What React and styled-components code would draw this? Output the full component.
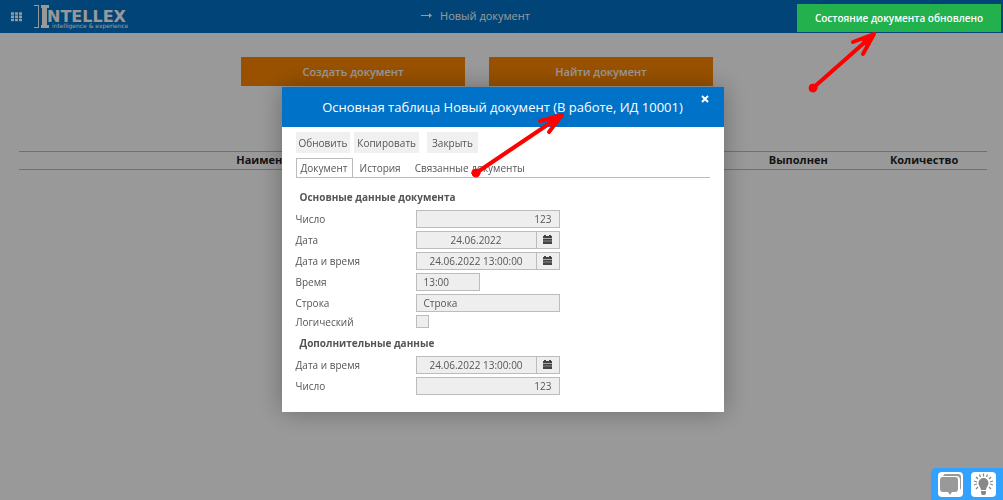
import React from "react";
import styled, { createGlobalStyle } from "styled-components";

const GlobalStyle = createGlobalStyle`
  * {
    box-sizing: border-box;
  }
  body {
    margin: 0;
    background: white;
    color: #222;
    font-family: "Open Sans", "Noto Sans", sans-serif;
    font-size: 11px;
  }
  button,
  input {
    margin: 0;
    font-family: inherit;
  }
`;

const Page = styled.div`
  min-height: 100vh;
`;

const TopBar = styled.header`
  display: grid;
  grid-template-columns: 1fr auto 1fr;
  align-items: center;
  height: 33px;
  padding: 0 52px 0 0;
  background: #0072c8;
  color: white;
`;

const Brand = styled.div`
  display: flex;
  align-items: center;
  gap: 12px;
  padding-left: 11px;
`;

const MenuButton = styled.button`
  display: flex;
  padding: 0;
  border: none;
  background: none;
`;

const DocTitle = styled.h1`
  display: flex;
  align-items: center;
  gap: 8px;
  margin: 0;
  padding-bottom: 3px;
  font-size: 11px;
  font-weight: 400;
`;

const Actions = styled.div`
  display: flex;
  justify-content: center;
  gap: 24px;
  padding: 24px 52px 0 3px;
`;

const ActionButton = styled.button`
  width: 224px;
  height: 29px;
  border: none;
  background: #ff8800;
  color: white;
  font-size: 11px;
  font-weight: 600;
`;

const DocTable = styled.table`
  width: calc(100% - 35px);
  margin: 65px 16px 0 19px;
  border-collapse: collapse;
  table-layout: fixed;
  th {
    height: 18px;
    padding: 0 0 2px;
    border-top: 1px solid #bbb;
    border-bottom: 1px solid #bbb;
    font-size: 11px;
    line-height: 15px;
    text-align: center;
  }
`;

const HelpBar = styled.div`
  position: fixed;
  right: 0;
  bottom: 0;
  z-index: 2;
  display: flex;
  gap: 8px;
  padding: 4px 7px 3px;
  border-radius: 5px 0 0 0;
  background: #33a2ff;
`;

const HelpButton = styled.button`
  display: flex;
  width: 25px;
  height: 25px;
  padding: 0;
  border: none;
  border-radius: 4px;
  background: white;
`;

const Overlay = styled.div`
  position: fixed;
  inset: 0;
  z-index: 1;
  padding: 87px 0 0 2px;
  background: rgba(0, 0, 0, 0.4);
`;

const Modal = styled.section`
  width: 442px;
  max-width: 100%;
  margin: 0 auto;
  padding-bottom: 17px;
  background: white;
  box-shadow: 0 0 24px rgba(0, 0, 0, 0.3);
  color: #555;
`;

const ModalHeader = styled.header`
  position: relative;
  height: 40px;
  background: #0072c8;
  color: white;
  h2 {
    margin: 0;
    font-size: 13px;
    font-weight: 400;
    line-height: 40px;
    text-align: center;
  }
`;

const CloseButton = styled.button`
  position: absolute;
  top: 8px;
  right: 15px;
  display: flex;
  padding: 0;
  border: none;
  background: none;
`;

const ModalBody = styled.div`
  padding: 5px 14px 0;
`;

const Toolbar = styled.div`
  display: flex;
  gap: 4px;
  button {
    height: 21px;
    padding: 0 3px;
    border: none;
    background: #f0f0f0;
    color: #555;
    font-size: 10px;
  }
  button:last-child {
    margin-left: 4px;
    padding: 0 5px;
  }
`;

const Tabs = styled.div`
  display: flex;
  margin-top: 5px;
  border-bottom: 1px solid #bcbcbc;
`;

const Tab = styled.button`
  height: 19px;
  padding: 0 ${p => (p.$active ? 4 : 7)}px;
  border: ${p => (p.$active ? "1px solid #bcbcbc" : "none")};
  border-bottom: none;
  background: none;
  color: #555;
  font-size: 10px;
`;

const FieldSet = styled.fieldset`
  display: flex;
  flex-direction: column;
  gap: 3px;
  min-width: 0;
  margin: 0;
  padding: 0;
  border: none;
  legend {
    padding: 12px 4px 5px;
    font-size: 10px;
    font-weight: 700;
    line-height: 15px;
  }
  & + & legend {
    padding-top: 8px;
  }
`;

const Row = styled.div`
  display: flex;
  align-items: center;
  height: ${p => (p.$short ? 13 : 18)}px;
  label {
    width: 120px;
    font-size: 10px;
  }
`;

const TextInput = styled.input`
  width: ${p => p.$width || 144}px;
  height: 18px;
  padding: 0 7px;
  border: 1px solid #bcbcbc;
  border-radius: 0;
  background: #eee;
  color: #555;
  font-size: 10px;
  text-align: ${p => p.$align || "left"};
  outline: none;
`;

const DateButton = styled.button`
  display: flex;
  align-items: center;
  justify-content: center;
  width: 23px;
  height: 18px;
  padding: 0 0 2px;
  border: 1px solid #bcbcbc;
  border-left: none;
  background: #eee;
`;

const CheckBox = styled.input`
  appearance: none;
  width: 13px;
  height: 13px;
  border: 1px solid #bcbcbc;
  background: #eee;
`;

const Toast = styled.div`
  position: fixed;
  top: 4px;
  right: 2px;
  z-index: 3;
  width: 204px;
  background: #22b14c;
  color: white;
  font-size: 10px;
  font-weight: 600;
  line-height: 28px;
  text-align: center;
`;

const Marks = styled.svg`
  position: fixed;
  top: 0;
  left: 0;
  z-index: 4;
  pointer-events: none;
`;

const Logo = () => (
  <svg width="94" height="28" viewBox="0 0 94 28" fill="white">
    <path d="M0 2h5v23H0v-1h4V3H0z" />
    <path d="M7 2h8v3h-2v17h2v3H7v-3h1V5H7z" />
    <text x="13" y="19" fontFamily="DejaVu Sans, sans-serif" fontSize="16" fontWeight="700">
      NTELLEX
    </text>
    <text x="18" y="25" fontFamily="DejaVu Sans, sans-serif" fontSize="6">
      intelligence &amp; experience
    </text>
  </svg>
);

const GridIcon = () => (
  <svg width="11" height="10" fill="white">
    {[0.3, 3.5, 6.7].map(y =>
      [0, 4, 8].map(x => <rect key={`${x}-${y}`} x={x} y={y} width="3" height="2.5" />)
    )}
  </svg>
);

const CalendarIcon = () => (
  <svg width="9" height="9" fill="#444" shapeRendering="crispEdges">
    <path d="M1 0h2v1h3V0h2v1h1v2H0V1h1zM0 4h9v1H0zM0 7h9v2H0z" />
    <path d="M0 5h9v2H0z" fill="#666" />
    <path d="M0 3h9v1H0z" fill="#aaa" />
  </svg>
);

const ChatIcon = () => (
  <svg width="25" height="25" viewBox="0 0 25 25" fill="#999">
    <path d="M7 2h13q3 0 3 3v10q0 2-1 3V8q0-4-4-4H5q1-2 2-2z" />
    <path d="M5 5h12q3 0 3 3v9q0 3-3 3h-3l-2 3-2-3H5q-3 0-3-3V8q0-3 3-3z" />
  </svg>
);

const BulbIcon = () => (
  <svg width="25" height="25" viewBox="0 0 25 25" fill="#888">
    <path d="M12.500 6a5 5 0 0 1 5 5c0 3-2 3.500-2.500 7h-5C9.500 14.500 7.500 14 7.500 11a5 5 0 0 1 5-5zM10 19h5v2l-1 2h-3l-1-2z" />
    <g stroke="#888" strokeWidth="1.300">
      <path d="M12.500 1.500v3M8.500 2.500l1 2.500M16.500 2.500l-1 2.500M5 5l2 2M20 5l-2 2M3 9l3 1M22 9l-3 1M3 13l3-1M22 13l-3-1M5 17l2-2M20 17l-2-2" />
    </g>
  </svg>
);

const Field = ({ id, label, value, align, width, date }) => (
  <Row>
    <label htmlFor={id}>{label}</label>
    <TextInput
      id={id}
      type="text"
      value={value}
      readOnly
      $align={date ? "center" : align}
      $width={date ? 121 : width}
    />
    {date && (
      <DateButton type="button" aria-label={label}>
        <CalendarIcon />
      </DateButton>
    )}
  </Row>
);

const App = () => (
  <Page>
    <GlobalStyle />
    <TopBar>
      <Brand>
        <MenuButton aria-label="Меню">
          <GridIcon />
        </MenuButton>
        <Logo />
      </Brand>
      <DocTitle>
        <svg width="11" height="5" fill="white">
          <path d="M0 2h8V0l3 2.500L8 5V3H0z" />
        </svg>
        Новый документ
      </DocTitle>
    </TopBar>
    <Actions>
      <ActionButton>Создать документ</ActionButton>
      <ActionButton>Найти документ</ActionButton>
    </Actions>
    <DocTable>
      <colgroup>
        <col width="54%" />
        <col />
        <col width="13%" />
        <col width="13%" />
      </colgroup>
      <thead>
        <tr>
          <th>Наименование</th>
          <th />
          <th>Выполнен</th>
          <th>Количество</th>
        </tr>
      </thead>
    </DocTable>

    <Overlay>
      <Modal role="dialog" aria-labelledby="modal-title">
        <ModalHeader>
          <h2 id="modal-title">Основная таблица Новый документ (В работе, ИД 10001)</h2>
          <CloseButton aria-label="Закрыть">
            <svg width="8" height="8" stroke="white" strokeWidth="2">
              <path d="M1 1l6 6M7 1L1 7" />
            </svg>
          </CloseButton>
        </ModalHeader>
        <ModalBody>
          <Toolbar>
            <button>Обновить</button>
            <button>Копировать</button>
            <button>Закрыть</button>
          </Toolbar>
          <Tabs role="tablist">
            <Tab role="tab" $active>Документ</Tab>
            <Tab role="tab">История</Tab>
            <Tab role="tab">Связанные документы</Tab>
          </Tabs>
          <FieldSet>
            <legend>Основные данные документа</legend>
            <Field id="number" label="Число" value="123" align="right" />
            <Field id="date" label="Дата" value="24.06.2022" date />
            <Field id="datetime" label="Дата и время" value="24.06.2022 13:00:00" date />
            <Field id="time" label="Время" value="13:00" width={64} />
            <Field id="string" label="Строка" value="Строка" />
            <Row $short>
              <label htmlFor="logical">Логический</label>
              <CheckBox id="logical" type="checkbox" />
            </Row>
          </FieldSet>
          <FieldSet>
            <legend>Дополнительные данные</legend>
            <Field id="datetime2" label="Дата и время" value="24.06.2022 13:00:00" date />
            <Field id="number2" label="Число" value="123" align="right" />
          </FieldSet>
        </ModalBody>
      </Modal>
    </Overlay>

    <HelpBar>
      <HelpButton aria-label="Сообщения">
        <ChatIcon />
      </HelpButton>
      <HelpButton aria-label="Подсказки">
        <BulbIcon />
      </HelpButton>
    </HelpBar>
    <Toast role="status">Состояние документа обновлено</Toast>
    <Marks width="1003" height="500" fill="none" stroke="red" strokeWidth="4" strokeLinecap="round" strokeLinejoin="round">
      <path d="M476 173L562 115M540 121L562 115L549 132" />
      <path d="M813 88L873 35M853 42L874 34L863 54" />
      <path d="M563 114l-16 6 6 7zM874 34l-12 6 4 6z" fill="red" strokeWidth="1" />
      <circle cx="476" cy="173" r="4" fill="red" strokeWidth="1" />
      <circle cx="813" cy="88" r="4" fill="red" strokeWidth="1" />
    </Marks>
  </Page>
);

export default App;
